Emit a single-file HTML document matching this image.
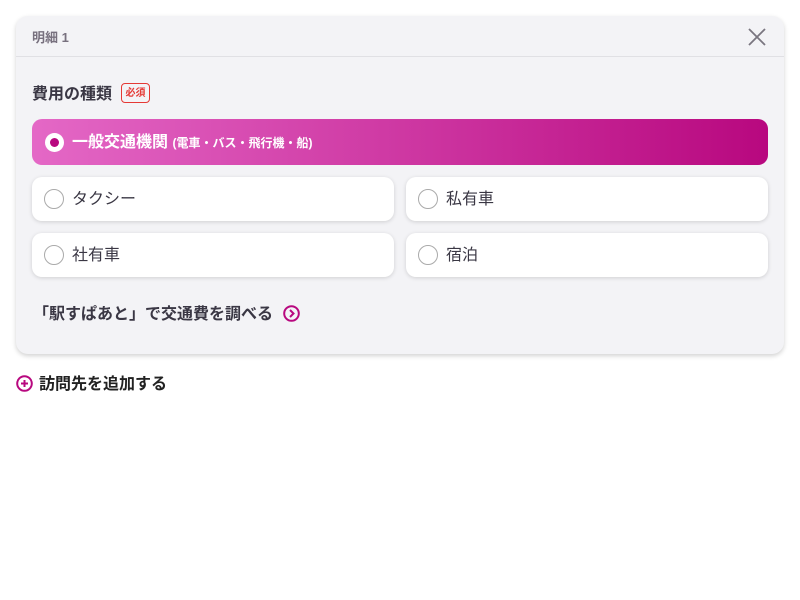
<!DOCTYPE html>
<html><head><meta charset="utf-8"><style>
*{box-sizing:border-box;margin:0;padding:0}
body{width:800px;height:600px;background:#fff;font-family:"Liberation Sans","Noto Sans CJK JP",sans-serif;position:relative;overflow:hidden}
.card{position:absolute;left:16px;top:16px;width:768px;height:338px;background:#f3f3f6;border-radius:12px;box-shadow:0 2px 5px rgba(0,0,0,.18)}
.hd{height:41px;border-bottom:1px solid #e0e0e4;position:relative}
.hd span{position:absolute;left:16px;top:11px;font-size:13px;font-weight:bold;color:#77707e}
.x{position:absolute;right:18px;top:12px}
.lbl{position:absolute;left:16px;top:68px;font-size:16px;font-weight:bold;color:#3a3744;line-height:22px}
.req{position:absolute;left:105px;top:67px;width:29px;height:20px;border:1px solid #e53935;border-radius:4px;color:#e53935;font-size:10px;font-weight:bold;text-align:center;line-height:20px}
.sel{position:absolute;left:16px;top:103px;width:736px;height:46px;border-radius:10px;background:linear-gradient(90deg,#e468c6,#b8087f)}
.sel .r{position:absolute;left:13px;top:14px;width:19px;height:19px;border-radius:50%;background:#fff}
.sel .r:after{content:"";position:absolute;left:5px;top:5px;width:9px;height:9px;border-radius:50%;background:#b8087f}
.sel .t{position:absolute;left:40px;top:13px;color:#fff;font-size:16px;font-weight:bold;line-height:22px}
.sel .t small{font-size:12px}
.opt{position:absolute;width:362px;height:44px;background:#fff;border-radius:10px;box-shadow:0 1px 4px rgba(0,0,0,.15)}
.opt .r{position:absolute;left:12px;top:12px;width:20px;height:20px;border-radius:50%;border:1px solid #aaa}
.opt .t{position:absolute;left:40px;top:12px;font-size:16px;color:#3a3744;line-height:22px}
.link{position:absolute;left:17px;top:288px;font-size:16px;font-weight:bold;color:#3a3744;line-height:22px}
.add{position:absolute;left:16px;top:374px;font-size:16px;font-weight:bold;color:#222;line-height:22px}
</style></head><body>
<div class="card">
 <div class="hd"><span>明細 1</span>
 <svg class="x" width="18" height="18" viewBox="0 0 18 18"><path d="M1 1L17 17M17 1L1 17" stroke="#7a7680" stroke-width="1.8"/></svg></div>
 <div class="lbl">費用の種類</div><div class="req">必須</div>
 <div class="sel"><div class="r"></div><div class="t">一般交通機関 <small>(電車・バス・飛行機・船)</small></div></div>
 <div class="opt" style="left:16px;top:161px"><div class="r"></div><div class="t">タクシー</div></div>
 <div class="opt" style="left:390px;top:161px"><div class="r"></div><div class="t">私有車</div></div>
 <div class="opt" style="left:16px;top:217px"><div class="r"></div><div class="t">社有車</div></div>
 <div class="opt" style="left:390px;top:217px"><div class="r"></div><div class="t">宿泊</div></div>
 <div class="link">「駅すぱあと」で交通費を調べる
 <svg style="vertical-align:-3px;margin-left:6px" width="17" height="17" viewBox="0 0 17 17"><circle cx="8.5" cy="8.5" r="7.3" fill="none" stroke="#b8087f" stroke-width="2"/><path d="M7 5L10.5 8.5L7 12" fill="none" stroke="#b8087f" stroke-width="2"/></svg></div>
</div>
<div class="add"><svg style="vertical-align:-3px;margin-right:6px" width="17" height="17" viewBox="0 0 17 17"><circle cx="8.5" cy="8.5" r="7.3" fill="none" stroke="#b8087f" stroke-width="2"/><path d="M8.5 5v7M5 8.5h7" stroke="#b8087f" stroke-width="2"/></svg>訪問先を追加する</div>
</body></html>
